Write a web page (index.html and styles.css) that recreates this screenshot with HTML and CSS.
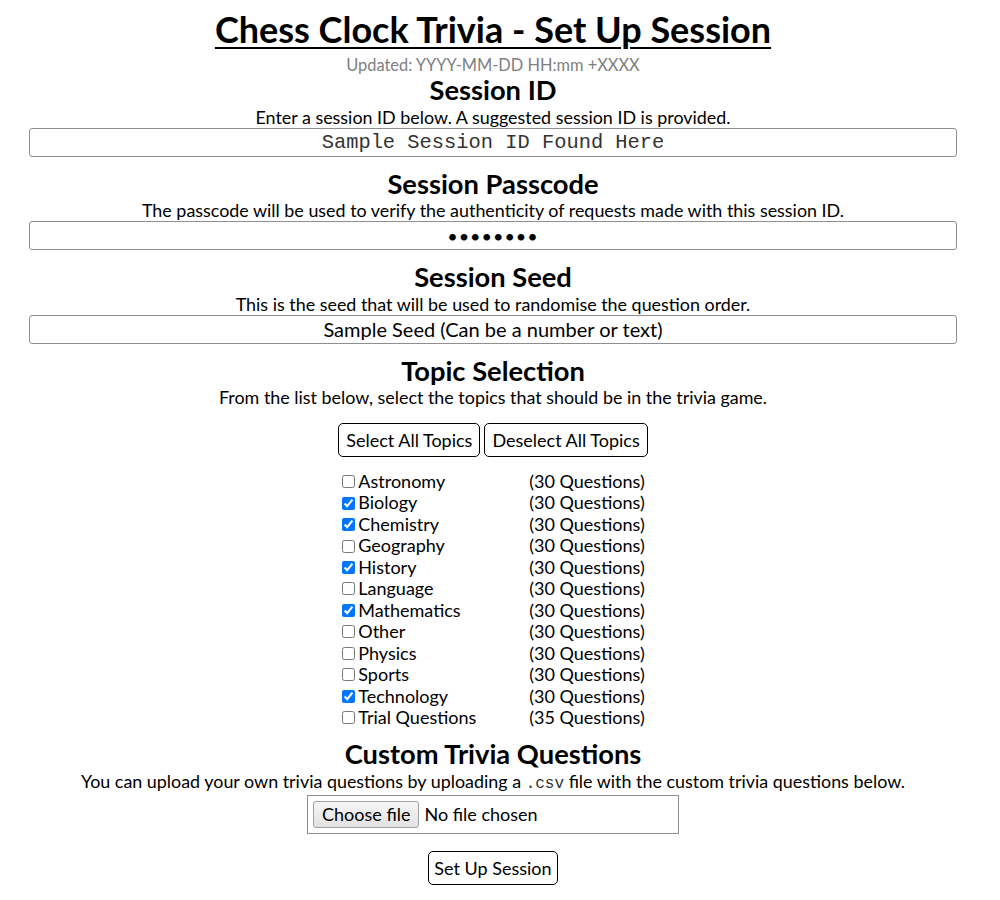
FILE: index.html
```html
<!DOCTYPE html>
<html lang="en">
<head>
<meta charset="utf-8">
<title>Chess Clock Trivia - Set Up Session</title>
<link rel="stylesheet" href="styles.css">
</head>
<body>
<main class="page">
  <h1 class="title">Chess Clock Trivia - Set Up Session</h1>
  <p class="updated">Updated: YYYY-MM-DD HH:mm +XXXX</p>

  <section class="field">
    <h2 class="heading">Session ID</h2>
    <p class="desc">Enter a session ID below. A suggested session ID is provided.</p>
    <input class="text-input mono" type="text" value="Sample Session ID Found Here">
  </section>

  <section class="field">
    <h2 class="heading">Session Passcode</h2>
    <p class="desc">The passcode will be used to verify the authenticity of requests made with this session ID.</p>
    <input class="text-input pass" type="password" value="12345678">
  </section>

  <section class="field">
    <h2 class="heading">Session Seed</h2>
    <p class="desc">This is the seed that will be used to randomise the question order.</p>
    <input class="text-input" type="text" value="Sample Seed (Can be a number or text)">
  </section>

  <section class="field">
    <h2 class="heading">Topic Selection</h2>
    <p class="desc">From the list below, select the topics that should be in the trivia game.</p>
    <div class="btn-row">
      <button class="btn" type="button">Select All Topics</button>
      <button class="btn" type="button">Deselect All Topics</button>
    </div>
    <div class="topics">
      <label class="topic"><input type="checkbox">Astronomy</label><span class="count">(30 Questions)</span>
      <label class="topic"><input type="checkbox" checked>Biology</label><span class="count">(30 Questions)</span>
      <label class="topic"><input type="checkbox" checked>Chemistry</label><span class="count">(30 Questions)</span>
      <label class="topic"><input type="checkbox">Geography</label><span class="count">(30 Questions)</span>
      <label class="topic"><input type="checkbox" checked>History</label><span class="count">(30 Questions)</span>
      <label class="topic"><input type="checkbox">Language</label><span class="count">(30 Questions)</span>
      <label class="topic"><input type="checkbox" checked>Mathematics</label><span class="count">(30 Questions)</span>
      <label class="topic"><input type="checkbox">Other</label><span class="count">(30 Questions)</span>
      <label class="topic"><input type="checkbox">Physics</label><span class="count">(30 Questions)</span>
      <label class="topic"><input type="checkbox">Sports</label><span class="count">(30 Questions)</span>
      <label class="topic"><input type="checkbox" checked>Technology</label><span class="count">(30 Questions)</span>
      <label class="topic"><input type="checkbox">Trial Questions</label><span class="count">(35 Questions)</span>
    </div>
  </section>

  <section class="field">
    <h2 class="heading custom">Custom Trivia Questions</h2>
    <p class="desc">You can upload your own trivia questions by uploading a <code class="code">.csv</code> file with the custom trivia questions below.</p>
    <label class="file-box">
      <span class="file-btn">Choose file</span>
      <span class="file-name">No file chosen</span>
      <input class="file-hidden" type="file" accept=".csv">
    </label>
    <div class="submit-row">
      <button class="btn submit" type="button">Set Up Session</button>
    </div>
  </section>
</main>
</body>
</html>
```

FILE: styles.css
```css
html, body {
  margin: 0;
  padding: 0;
  background: #ffffff;
}

body {
  font-family: Lato, "Noto Sans", sans-serif;
  color: #000000;
}

.page {
  width: 986px;
  display: flex;
  flex-direction: column;
  align-items: center;
  text-align: center;
  padding-top: 8px;
}

.title {
  margin: 0;
  font-size: 36px;
  font-weight: 700;
  text-decoration: underline;
  text-decoration-thickness: 2px;
  text-underline-offset: 4px;
  line-height: 42px;
}

.updated {
  margin: 5px 0 0;
  font-size: 16.4px;
  line-height: 20px;
  color: #808080;
}

.field {
  width: 100%;
  display: flex;
  flex-direction: column;
  align-items: center;
}

.heading {
  margin: 0;
  font-size: 27.3px;
  font-weight: 700;
  line-height: 30.5px;
}

.heading.custom {
  margin-top: 11px;
}

.desc {
  margin: 0;
  font-size: 17.9px;
  line-height: 22px;
}

.text-input {
  box-sizing: border-box;
  width: 928px;
  height: 29px;
  margin: 0 0 12px;
  border: 1px solid #8f8f8f;
  border-radius: 3px;
  text-align: center;
  font-family: Lato, "Noto Sans", sans-serif;
  font-size: 20px;
  color: #000;
  background: #fff;
  padding: 0 4px;
}

.text-input.mono {
  font-family: "Liberation Mono", monospace;
  font-size: 20.4px;
  color: #333;
}

.text-input.pass {
  font-size: 18px;
  letter-spacing: 1px;
}

.btn-row {
  display: flex;
  gap: 4px;
  margin-top: 15px;
}

.btn {
  box-sizing: border-box;
  font-family: Lato, "Noto Sans", sans-serif;
  font-size: 18px;
  color: #000;
  background: #fff;
  border: 1px solid #000;
  border-radius: 5px;
  padding: 0 7px;
  height: 34px;
  line-height: 32px;
}

.btn.submit {
  padding: 0 5px;
  height: 34px;
  line-height: 32px;
}

.topics {
  display: grid;
  grid-template-columns: 188px auto;
  margin-top: 14px;
  text-align: left;
  font-size: 18px;
  line-height: 21.45px;
}

.topic {
  display: flex;
  align-items: center;
}

.topic input {
  width: 13px;
  height: 13px;
  margin: 0 3px 0 1px;
}

.count {
  white-space: nowrap;
}

.code {
  font-family: "Liberation Mono", monospace;
  font-size: 16px;
  color: #333;
}

.file-box {
  box-sizing: border-box;
  width: 372px;
  height: 39px;
  margin-top: 0;
  border: 1px solid #8f8f8f;
  display: flex;
  align-items: center;
  gap: 5px;
  padding: 0 5px;
  text-align: left;
  font-size: 18px;
}

.file-btn {
  box-sizing: border-box;
  height: 27px;
  line-height: 25px;
  padding: 0 8px;
  border: 1px solid #a0a0a0;
  border-radius: 3px;
  background: linear-gradient(#f6f6f6, #e2e2e2);
  font-size: 18px;
}

.file-hidden {
  display: none;
}

.submit-row {
  margin-top: 17px;
  display: flex;
}
```
